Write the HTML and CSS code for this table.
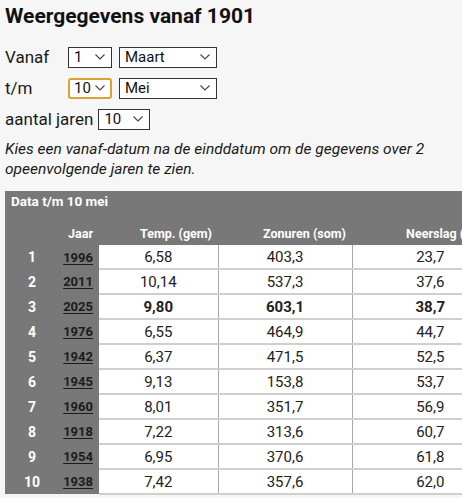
FILE: index.html
```html
<!DOCTYPE html>
<html lang="nl">
<head>
<meta charset="utf-8">
<title>Weergegevens vanaf 1901</title>
<link rel="stylesheet" href="styles.css">
</head>
<body>
<h1 class="title">Weergegevens vanaf 1901</h1>
<div class="form">
  <div class="row">
    <span class="label">Vanaf</span>
    <div class="sel sel-day"><span>1</span><svg class="chev" width="10" height="6" viewBox="0 0 10 6"><path d="M0.5 0.5 L5 5 L9.5 0.5" fill="none" stroke="#444" stroke-width="1.1"/></svg></div>
    <div class="sel sel-month"><span>Maart</span><svg class="chev" width="10" height="6" viewBox="0 0 10 6"><path d="M0.5 0.5 L5 5 L9.5 0.5" fill="none" stroke="#444" stroke-width="1.1"/></svg></div>
  </div>
  <div class="row">
    <span class="label">t/m</span>
    <div class="sel sel-day focus"><span>10</span><svg class="chev" width="10" height="6" viewBox="0 0 10 6"><path d="M0.5 0.5 L5 5 L9.5 0.5" fill="none" stroke="#444" stroke-width="1.1"/></svg></div>
    <div class="sel sel-month"><span>Mei</span><svg class="chev" width="10" height="6" viewBox="0 0 10 6"><path d="M0.5 0.5 L5 5 L9.5 0.5" fill="none" stroke="#444" stroke-width="1.1"/></svg></div>
  </div>
  <div class="row row-years">
    <span class="label-inline">aantal jaren</span>
    <div class="sel sel-years"><span>10</span><svg class="chev" width="10" height="6" viewBox="0 0 10 6"><path d="M0.5 0.5 L5 5 L9.5 0.5" fill="none" stroke="#444" stroke-width="1.1"/></svg></div>
  </div>
</div>
<p class="note">Kies een vanaf-datum na de einddatum om de gegevens over 2 opeenvolgende jaren te zien.</p>
<div class="table-wrap">
<table class="data">
  <colgroup>
    <col class="c-rank">
    <col class="c-year">
    <col class="c-temp">
    <col class="c-sun">
    <col class="c-rain">
  </colgroup>
  <thead>
    <tr class="cap"><th colspan="5">Data t/m 10 mei</th></tr>
    <tr class="heads">
      <th></th>
      <th>Jaar</th>
      <th>Temp. (gem)</th>
      <th>Zonuren (som)</th>
      <th>Neerslag (mm)</th>
    </tr>
  </thead>
  <tbody>
    <tr><td class="rank">1</td><td class="year"><a>1996</a></td><td>6,58</td><td>403,3</td><td>23,7</td></tr>
    <tr><td class="rank">2</td><td class="year"><a>2011</a></td><td>10,14</td><td>537,3</td><td>37,6</td></tr>
    <tr class="cur"><td class="rank">3</td><td class="year"><a>2025</a></td><td>9,80</td><td>603,1</td><td>38,7</td></tr>
    <tr><td class="rank">4</td><td class="year"><a>1976</a></td><td>6,55</td><td>464,9</td><td>44,7</td></tr>
    <tr><td class="rank">5</td><td class="year"><a>1942</a></td><td>6,37</td><td>471,5</td><td>52,5</td></tr>
    <tr><td class="rank">6</td><td class="year"><a>1945</a></td><td>9,13</td><td>153,8</td><td>53,7</td></tr>
    <tr><td class="rank">7</td><td class="year"><a>1960</a></td><td>8,01</td><td>351,7</td><td>56,9</td></tr>
    <tr><td class="rank">8</td><td class="year"><a>1918</a></td><td>7,22</td><td>313,6</td><td>60,7</td></tr>
    <tr><td class="rank">9</td><td class="year"><a>1954</a></td><td>6,95</td><td>370,6</td><td>61,8</td></tr>
    <tr><td class="rank">10</td><td class="year"><a>1938</a></td><td>7,42</td><td>357,6</td><td>62,0</td></tr>
  </tbody>
</table>
</div>
</body>
</html>
```
FILE: styles.css
```css
html, body {
  margin: 0;
  padding: 0;
  background: #f6f6f6;
  overflow: hidden;
}
body {
  font-family: Roboto, "Liberation Sans", sans-serif;
  color: #1a1a1a;
  padding: 0 0 0 5px;
}
.title {
  font-size: 21px;
  font-weight: 700;
  margin: 0;
  padding-top: 3px;
  line-height: 26px;
  color: #111;
}
.form {
  display: flex;
  flex-direction: column;
  gap: 11px;
  margin-top: 18px;
}
.row {
  display: flex;
  align-items: center;
  gap: 7px;
  height: 20px;
}
.label {
  width: 56px;
  font-size: 17px;
}
.label-inline {
  font-size: 17px;
  margin-right: -2px;
}
.sel {
  box-sizing: border-box;
  height: 21px;
  border: 1px solid #333;
  background: #fff;
  display: flex;
  align-items: center;
  justify-content: space-between;
  padding: 0 6px 0 5px;
  font-size: 15px;
  color: #111;
}
.sel-day { width: 44px; }
.sel-month { width: 98px; }
.sel-years { width: 52px; }
.focus {
  border: 2px solid #d9a235;
  border-radius: 3px;
  padding-left: 4px;
  padding-right: 5px;
}
.chev { flex: none; }
.note {
  margin: 10px 0 0 0;
  font-size: 15.5px;
  font-style: italic;
  line-height: 20px;
  color: #1a1a1a;
  width: 440px;
}
.table-wrap {
  margin-top: 12px;
  width: 600px;
}
.data {
  border-collapse: collapse;
  font-size: 15px;
  table-layout: fixed;
  width: 495px;
}
.data th {
  background: #787878;
  color: #fff;
  font-weight: 700;
}
.cap th {
  text-align: left;
  font-size: 13.5px;
  height: 20px;
  padding: 0 6px 3px;
  vertical-align: middle;
}
.heads th {
  font-size: 12.5px;
  text-align: right;
  height: 31px;
  padding: 7px 6px 0 0;
  box-sizing: border-box;
  vertical-align: middle;
  white-space: nowrap;
}
.heads th:last-child { padding-right: 10px; }
.c-rank { width: 52px; }
.c-year { width: 42px; }
.c-temp { width: 119px; }
.c-sun { width: 134px; }
.c-rain { width: 148px; }
.data td {
  height: 23px;
  padding: 0;
  text-align: center;
  background: #fff;
  border-bottom: 2px solid #cfcfcf;
  border-left: 1px solid #a8a8a8;
  color: #222;
}
.data td:last-child { padding-left: 8px; }
.data td.rank {
  background: #787878;
  color: #fff;
  font-weight: 700;
  font-size: 14px;
  border: none;
  padding-left: 2px;
}
.data td.year {
  background: #787878;
  text-align: right;
  padding-right: 6px;
  font-weight: 700;
  font-size: 13px;
  border: none;
}
.year a {
  color: #1c1c1c;
  text-decoration: underline;
  text-underline-offset: 2px;
}
.data td:nth-child(3) { border-left: none; }
.cur td { font-weight: 700; }
```
